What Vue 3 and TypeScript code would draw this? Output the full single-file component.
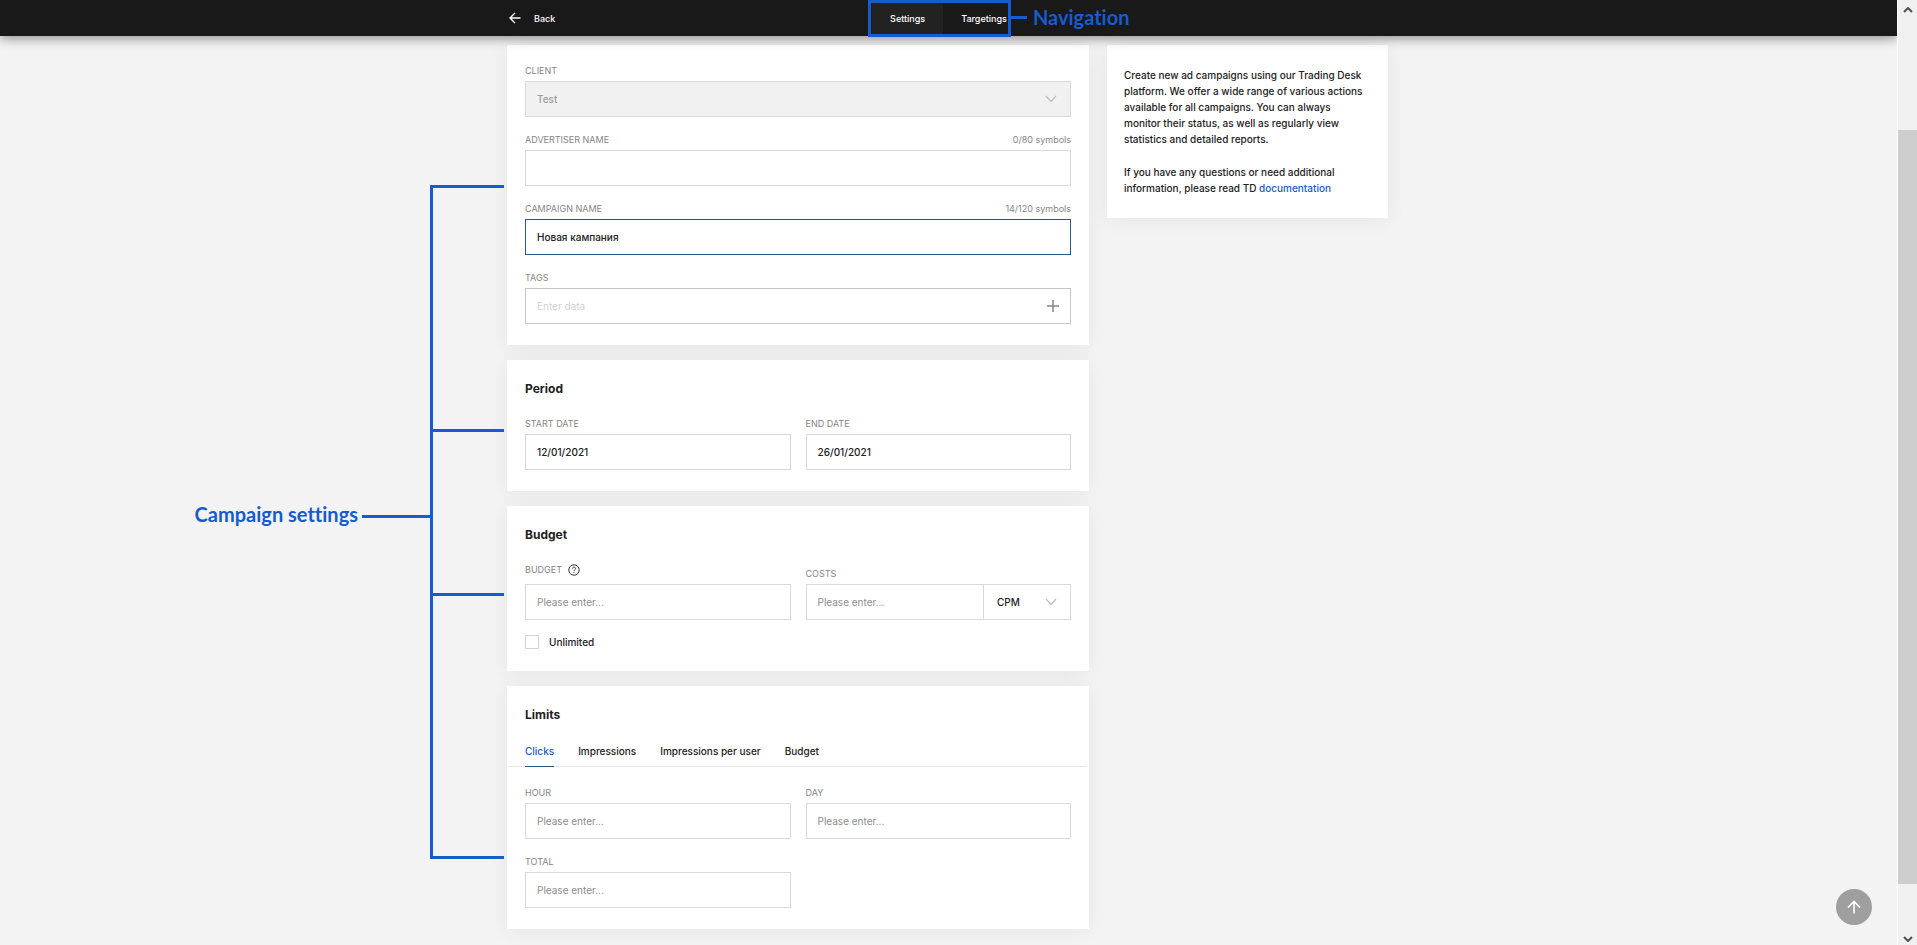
<script setup lang="ts">
import { ref } from 'vue'

interface TextField {
  id: string
  label: string
  value: string
}

const client = ref('Test')
const advertiser = ref('')
const campaign = ref('Новая кампания')
const tags = ref('')
const budget = ref('')
const costs = ref('')
const costModel = ref('CPM')
const unlimited = ref(false)

const navTabs = ['Settings', 'Targetings']
const activeNav = ref('Settings')

const period = ref<TextField[]>([
  { id: 'start-date', label: 'START DATE', value: '12/01/2021' },
  { id: 'end-date', label: 'END DATE', value: '26/01/2021' },
])

const limitTabs = ['Clicks', 'Impressions', 'Impressions per user', 'Budget']
const activeLimit = ref('Clicks')
const limits = ref<TextField[]>([
  { id: 'hour', label: 'HOUR', value: '' },
  { id: 'day', label: 'DAY', value: '' },
  { id: 'total', label: 'TOTAL', value: '' },
])

const branches = ['general', 'period', 'budget', 'limits']

function scrollToTop() {
  window.scrollTo({ top: 0, behavior: 'smooth' })
}
</script>

<template>
  <div class="app">
    <div class="page">
      <header class="topbar">
        <div class="topbar-inner">
          <button type="button" class="back">
            <svg width="12" height="12" viewBox="0 0 12 12" aria-hidden="true">
              <path d="M11.5 6H1M6 1 1 6l5 5" fill="none" stroke="currentColor" stroke-width="1.4" />
            </svg>
            Back
          </button>
          <nav class="nav">
            <button
              v-for="tab in navTabs"
              :key="tab"
              type="button"
              class="nav-tab"
              :class="{ active: tab === activeNav }"
              @click="activeNav = tab"
            >
              {{ tab }}
            </button>
            <div class="nav-frame"></div>
            <div class="nav-note"><span class="nav-line"></span><span class="note">Navigation</span></div>
          </nav>
        </div>
      </header>

      <main class="content">
        <form class="form" @submit.prevent>
          <section class="card stack">
            <div class="field">
              <label class="label" for="client">CLIENT</label>
              <div class="select-box disabled">
                <select id="client" v-model="client" class="control" disabled>
                  <option>Test</option>
                </select>
                <svg class="chevron" width="12" height="8" viewBox="0 0 12 8" aria-hidden="true">
                  <path d="m1 1 5 5.5L11 1" fill="none" stroke="currentColor" stroke-width="1.2" />
                </svg>
              </div>
            </div>
            <div class="field">
              <div class="label-row">
                <label class="label" for="advertiser">ADVERTISER NAME</label>
                <span class="counter">{{ advertiser.length }}/80 symbols</span>
              </div>
              <input id="advertiser" v-model="advertiser" class="control" type="text" maxlength="80" />
            </div>
            <div class="field">
              <div class="label-row">
                <label class="label" for="campaign">CAMPAIGN NAME</label>
                <span class="counter">{{ campaign.length }}/120 symbols</span>
              </div>
              <input id="campaign" v-model="campaign" class="control current" type="text" maxlength="120" />
            </div>
            <div class="field">
              <label class="label" for="tags">TAGS</label>
              <div class="tag-box">
                <input id="tags" v-model="tags" class="control bare faint" type="text" placeholder="Enter data" />
                <button type="button" class="add" aria-label="Add tag">
                  <svg width="12" height="12" viewBox="0 0 12 12" aria-hidden="true">
                    <path d="M6 0v12M0 6h12" stroke="currentColor" stroke-width="1.5" />
                  </svg>
                </button>
              </div>
            </div>
          </section>

          <section class="card">
            <h2 class="title">Period</h2>
            <div class="grid">
              <div v-for="f in period" :key="f.id" class="field">
                <label class="label" :for="f.id">{{ f.label }}</label>
                <input :id="f.id" v-model="f.value" class="control" type="text" />
              </div>
            </div>
          </section>

          <section class="card">
            <h2 class="title tight">Budget</h2>
            <div class="grid">
              <div class="field">
                <div class="label-help">
                  <label class="label" for="budget">BUDGET</label>
                  <button type="button" class="help" aria-label="Budget help">
                    <svg width="12" height="12" viewBox="0 0 12 12" aria-hidden="true">
                      <circle cx="6" cy="6" r="5.2" fill="none" stroke="currentColor" />
                      <path
                        d="M4.4 4.8C4.4 3.8 5.1 3.2 6 3.2s1.6.6 1.6 1.5C7.6 5.7 6 5.8 6 7.1M6 8v1"
                        fill="none"
                        stroke="currentColor"
                      />
                    </svg>
                  </button>
                </div>
                <input id="budget" v-model="budget" class="control" type="text" placeholder="Please enter..." />
              </div>
              <div class="field">
                <label class="label" for="costs">COSTS</label>
                <div class="cost-group">
                  <input id="costs" v-model="costs" class="control" type="text" placeholder="Please enter..." />
                  <div class="select-box cost-model">
                    <select v-model="costModel" class="control" aria-label="Cost model">
                      <option>CPM</option>
                      <option>CPC</option>
                    </select>
                    <svg class="chevron" width="12" height="8" viewBox="0 0 12 8" aria-hidden="true">
                      <path d="m1 1 5 5.5L11 1" fill="none" stroke="currentColor" stroke-width="1.2" />
                    </svg>
                  </div>
                </div>
              </div>
            </div>
            <label class="check" for="unlimited">
              <input id="unlimited" v-model="unlimited" type="checkbox" />
              Unlimited
            </label>
          </section>

          <section class="card">
            <h2 class="title tight">Limits</h2>
            <div class="tabs" role="tablist">
              <button
                v-for="tab in limitTabs"
                :key="tab"
                type="button"
                role="tab"
                class="tab"
                :class="{ active: tab === activeLimit }"
                :aria-selected="tab === activeLimit"
                @click="activeLimit = tab"
              >
                {{ tab }}
              </button>
            </div>
            <div class="grid">
              <div v-for="f in limits" :key="f.id" class="field">
                <label class="label" :for="f.id">{{ f.label }}</label>
                <input :id="f.id" v-model="f.value" class="control" type="text" placeholder="Please enter..." />
              </div>
            </div>
          </section>

          <div class="bracket">
            <div class="stem"></div>
            <div v-for="b in branches" :key="b" class="branch" :class="b"></div>
            <div class="settings-note"><span class="note">Campaign settings</span><span class="settings-line"></span></div>
          </div>
        </form>

        <aside class="card info">
          <p>
            Create new ad campaigns using our Trading Desk platform. We offer a wide range of various actions available
            for all campaigns. You can always monitor their status, as well as regularly view statistics and detailed
            reports.
          </p>
          <p>If you have any questions or need additional information, please read TD <a href="#">documentation</a></p>
        </aside>
      </main>

      <button type="button" class="to-top" aria-label="Scroll to top" @click="scrollToTop">
        <svg width="14" height="14" viewBox="0 0 14 14" aria-hidden="true">
          <path d="M7 13.5V1.5M1 7.5l6-6 6 6" fill="none" stroke="currentColor" stroke-width="1.6" />
        </svg>
      </button>
    </div>

    <div class="scrollbar" aria-hidden="true">
      <svg width="10" height="6" viewBox="0 0 10 6"><path d="m1 5 4-4 4 4" fill="none" stroke="#505050" stroke-width="2" /></svg>
      <div class="track"><div class="thumb"></div></div>
      <svg width="10" height="6" viewBox="0 0 10 6"><path d="m1 1 4 4 4-4" fill="none" stroke="#505050" stroke-width="2" /></svg>
    </div>
  </div>
</template>

<style>
body {
  margin: 0;
  background: #f3f3f3;
}
</style>

<style scoped>
.app {
  --blue: #165bcf;
  display: flex;
  min-height: 100vh;
  font-family: Inter, Roboto, sans-serif;
  font-size: 10px;
  font-weight: 500;
  color: #212121;
}
.app * {
  box-sizing: border-box;
}
button,
input,
select {
  font: inherit;
  color: inherit;
}
button {
  padding: 0;
  border: 0;
  background: none;
  cursor: pointer;
}
.page {
  flex: 1;
  min-width: 0;
}
.topbar {
  position: relative;
  z-index: 2;
  height: 36px;
  background: #191919;
  box-shadow: 0 2px 12px rgba(0, 0, 0, 0.45);
  clip-path: inset(0 0 -24px 0);
  color: #fff;
  font-size: 9px;
}
.topbar-inner {
  position: relative;
  display: flex;
  justify-content: center;
  width: 883px;
  max-width: 100%;
  height: 100%;
  margin: 0 auto;
}
.back {
  position: absolute;
  left: 2px;
  top: 0;
  display: flex;
  align-items: center;
  gap: 13px;
  height: 36px;
}
.nav {
  position: relative;
  display: flex;
}
.nav-tab {
  padding: 0 18px;
}
.nav-tab.active {
  background: #222;
}
.nav-frame {
  position: absolute;
  inset: 0 14px -1px -4px;
  border: 3px solid var(--blue);
  pointer-events: none;
}
.nav-note {
  position: absolute;
  left: calc(100% - 14px);
  top: 0;
  display: flex;
  align-items: center;
  gap: 6px;
  height: 34px;
}
.nav-line {
  width: 16px;
  height: 3px;
  background: var(--blue);
}
.note {
  font: 700 20px/24px Lato, sans-serif;
  font-variant-ligatures: none;
  color: var(--blue);
  white-space: nowrap;
}
.content {
  display: flex;
  align-items: flex-start;
  gap: 18px;
  width: 883px;
  max-width: 100%;
  margin: 0 auto;
  padding: 9px 2px 16px 0;
  box-sizing: border-box;
}
.form {
  position: relative;
  flex: 1;
  display: flex;
  flex-direction: column;
  gap: 15px;
}
.card {
  padding: 20px 18px 21px;
  background: #fff;
  box-shadow: 0 2px 20px rgba(0, 0, 0, 0.06);
}
.stack {
  display: flex;
  flex-direction: column;
  gap: 17px;
}
.title {
  margin: 0 0 20px;
  font-size: 12px;
  line-height: 18px;
  font-weight: 700;
}
.title.tight {
  margin-bottom: 16px;
}
.grid {
  display: grid;
  grid-template-columns: 1fr 1fr;
  gap: 17px 15px;
}
.field {
  display: flex;
  flex-direction: column;
  justify-content: flex-end;
  gap: 4px;
  min-width: 0;
}
.label,
.counter {
  font-size: 9px;
  font-weight: 400;
  line-height: 12px;
  color: #858585;
}
.label-row {
  display: flex;
  justify-content: space-between;
}
.label-help {
  display: flex;
  align-items: center;
  gap: 6px;
  height: 20px;
}
.help {
  display: flex;
  color: #333;
}
.control {
  width: 100%;
  height: 36px;
  padding: 0 11px 1px;
  border: 1px solid #d9d9d9;
  border-radius: 0;
  background: #fff;
  outline: none;
  appearance: none;
}
.control::placeholder {
  color: #8c8c8c;
  font-weight: 400;
  opacity: 1;
}
.control.current {
  border-color: #24598c;
}
.select-box {
  position: relative;
}
.select-box .chevron {
  position: absolute;
  right: 14px;
  top: 14px;
  color: #bdbdbd;
  pointer-events: none;
}
.disabled .control {
  background: #f1f1f1;
  color: #9c9c9c;
  opacity: 1;
}
.tag-box {
  display: flex;
  height: 36px;
  border: 1px solid #c6c6c6;
}
.control.bare {
  height: 34px;
  border: 0;
}
.control.faint::placeholder {
  color: #cfcfcf;
}
.add {
  display: flex;
  align-items: center;
  padding: 0 11px;
  color: #858585;
}
.cost-group {
  display: flex;
}
.cost-group > .control {
  flex: 1;
  min-width: 0;
}
.cost-model {
  flex: 0 0 87px;
}
.cost-model .control {
  padding: 0 13px;
  border-left: 0;
}
.check {
  display: flex;
  align-items: center;
  gap: 10px;
  width: max-content;
  height: 16px;
  margin-top: 14px;
}
.check input {
  width: 14px;
  height: 14px;
  margin: 0;
  border: 1px solid #d3d3d3;
  background: #fff;
  appearance: none;
}
.check input:checked {
  background: var(--blue);
}
.tabs {
  display: flex;
  gap: 24px;
  margin: 0 -16px 20px;
  padding: 0 16px;
  box-shadow: inset 0 -1px #e4e4e4;
}
.tab {
  height: 27px;
  padding-bottom: 4px;
  border-bottom: 1px solid transparent;
  line-height: 22px;
}
.tab.active {
  color: var(--blue);
  border-color: #24598c;
}
.info {
  width: 281px;
  padding: 22px 20px 22px 17px;
  line-height: 16px;
}
.info p {
  margin: 0;
}
.info p + p {
  margin-top: 17px;
}
.info a {
  color: var(--blue);
  text-decoration: none;
}
.bracket {
  position: absolute;
  top: 140px;
  bottom: 70px;
  right: 100%;
  width: 77px;
  pointer-events: none;
}
.stem {
  width: 3px;
  height: 100%;
  background: var(--blue);
}
.branch {
  position: absolute;
  left: 0;
  width: 74px;
  height: 3px;
  background: var(--blue);
}
.general {
  top: 0;
}
.period {
  top: 244px;
}
.budget {
  top: 408px;
}
.limits {
  bottom: 0;
}
.settings-note {
  position: absolute;
  right: 100%;
  top: 317px;
  display: flex;
  align-items: center;
  gap: 4px;
}
.settings-note .note {
  padding-bottom: 4px;
}
.settings-line {
  width: 68px;
  height: 3px;
  background: var(--blue);
}
.to-top {
  position: fixed;
  right: 45px;
  bottom: 20px;
  display: flex;
  align-items: center;
  justify-content: center;
  width: 36px;
  height: 36px;
  border-radius: 50%;
  background: #9f9f9f;
  color: #fff;
}
.scrollbar {
  position: sticky;
  top: 0;
  display: flex;
  flex-direction: column;
  align-items: center;
  gap: 7px;
  width: 20px;
  height: 100vh;
  padding: 7px 0 3px;
  border-left: 1px solid #fff;
  background: #f0f0f0;
}
.track {
  flex: 1;
  width: 100%;
}
.thumb {
  height: 83%;
  margin-top: 110px;
  background: #cdcdcd;
}
</style>
